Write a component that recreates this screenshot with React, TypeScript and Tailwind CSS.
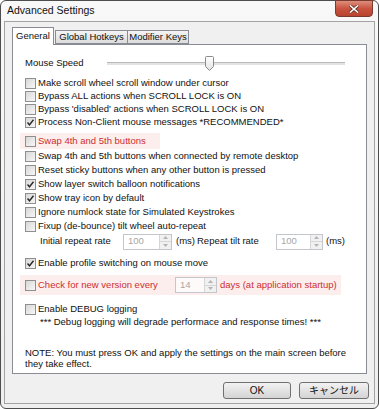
import React from "react";

const font = "font-['Liberation_Sans','Noto_Sans_CJK_JP',sans-serif]";

function CheckBox({ checked }: { checked?: boolean }) {
  return (
    <div className="relative h-[11px] w-[11px] shrink-0 border border-[#8f8f8f] bg-gradient-to-br from-[#d8d8d8] to-[#f7f7f7]">
      {checked && (
        <svg className="absolute left-0 top-0" width="9" height="9" viewBox="0 0 9 9">
          <path d="M1.5 4.5 L3.5 6.8 L7.5 1.8" fill="none" stroke="#2a2a2a" strokeWidth="1.4" />
        </svg>
      )}
    </div>
  );
}

function Row({ label, checked, h = "h-[14px]" }: { label: string; checked?: boolean; h?: string }) {
  return (
    <div className={`flex items-center ${h}`}>
      <CheckBox checked={checked} />
      <span className="ml-[2px] whitespace-nowrap">{label}</span>
    </div>
  );
}

function Spin({ value, w, bg = "bg-white" }: { value: string; w: string; bg?: string }) {
  return (
    <div className={`flex h-[16px] shrink-0 border border-[#c4c6cb] ${w} ${bg}`}>
      <div className="flex flex-1 items-center pl-[4px] text-[#a6a6a6]">{value}</div>
      <div className="flex w-[12px] flex-col border-l border-[#d6d6d6] bg-[#f1f1f1]">
        <div className="flex flex-1 items-center justify-center border-b border-[#d6d6d6]">
          <svg width="5" height="3" viewBox="0 0 5 3">
            <path d="M0 3 L2.5 0 L5 3 Z" fill="#b4b4b4" />
          </svg>
        </div>
        <div className="flex flex-1 items-center justify-center">
          <svg width="5" height="3" viewBox="0 0 5 3">
            <path d="M0 0 L2.5 3 L5 0 Z" fill="#b4b4b4" />
          </svg>
        </div>
      </div>
    </div>
  );
}

export default function App() {
  return (
    <div className={`h-[409px] w-[379px] bg-white text-[9.5px] text-[#111] ${font}`}>
      <div className="relative flex h-[409px] w-[379px] flex-col rounded-[6px] border border-[#4d4d4d] bg-gradient-to-b from-[#f8f8f8] to-[#efefef] px-[3px] pb-[4px]">
        {/* title bar */}
        <div className="flex h-[20px] items-center pl-[3px] text-[10.5px] text-[#111]">Advanced Settings</div>
        <div className="absolute right-[5px] top-[-1px] flex h-[17px] w-[38px] items-center justify-center rounded-b-[4px] border border-[#7a3a30] bg-gradient-to-b from-[#dc8e7c] via-[#c9533f] to-[#b84430]">
          <svg width="10" height="8" viewBox="0 0 10 8">
            <path d="M1 0.5 L9 7.5 M9 0.5 L1 7.5" stroke="#5a2a22" strokeWidth="3" />
            <path d="M1 0.5 L9 7.5 M9 0.5 L1 7.5" stroke="#ffffff" strokeWidth="1.6" />
          </svg>
        </div>

        {/* client */}
        <div className="flex flex-1 flex-col border border-[#a3a3a3] bg-[#f0f0f0] px-[7px] pt-[5px]">
          <div className="relative z-10 -mb-px flex h-[18px] items-end">
            <div className="flex h-[18px] w-[42px] items-center justify-center border border-b-0 border-[#898c95] bg-white pb-[1px]">
              General
            </div>
            <div className="mb-[1px] ml-[1px] flex h-[14px] w-[73px] items-center justify-center border border-[#898c95] bg-gradient-to-b from-[#f4f4f4] to-[#dcdcdc]">
              Global Hotkeys
            </div>
            <div className="-ml-px mb-[1px] flex h-[14px] w-[62px] items-center justify-center border border-[#898c95] bg-gradient-to-b from-[#f4f4f4] to-[#dcdcdc]">
              Modifier Keys
            </div>
          </div>

          <div className="flex h-[330px] flex-col border border-[#898c95] bg-white pl-[12px]">
            {/* mouse speed */}
            <div className="mt-[10px] flex h-[16px] items-center">
              <div className="w-[82px]">Mouse Speed</div>
              <div className="relative h-[3px] w-[238px] border-t border-[#b9b9b9] bg-[#e3e3e3]">
                <svg className="absolute left-[98px] top-[-7px]" width="9" height="15" viewBox="0 0 9 15">
                  <defs>
                    <linearGradient id="th" x1="0" y1="0" x2="0" y2="1">
                      <stop offset="0" stopColor="#ffffff" />
                      <stop offset="1" stopColor="#e2e2e2" />
                    </linearGradient>
                  </defs>
                  <path d="M0.5 1.5 Q0.5 0.5 1.5 0.5 H7.5 Q8.5 0.5 8.5 1.5 V10.5 L4.5 14.5 L0.5 10.5 Z" fill="url(#th)" stroke="#8b8b8b" />
                </svg>
              </div>
            </div>

            <div className="mt-[6px]">
              <Row label="Make scroll wheel scroll window under cursor" h="h-[13px]" />
              <Row label="Bypass ALL actions when SCROLL LOCK is ON" h="h-[13px]" />
              <Row label="Bypass 'disabled' actions when SCROLL LOCK is ON" h="h-[13px]" />
              <Row label="Process Non-Client mouse messages *RECOMMENDED*" checked h="h-[13px]" />
            </div>

            <div className="-ml-[5px] mt-[4px] flex h-[16px] w-fit items-center bg-[#fdeeee] pl-[5px] pr-[14px] text-[#cc2e2e]">
              <CheckBox />
              <span className="ml-[2px] whitespace-nowrap">Swap 4th and 5th buttons</span>
            </div>

            <Row label="Swap 4th and 5th buttons when connected by remote desktop" />
            <Row label="Reset sticky buttons when any other button is pressed" />
            <Row label="Show layer switch balloon notifications" checked />
            <Row label="Show tray icon by default" checked />
            <Row label="Ignore numlock state for Simulated Keystrokes" />
            <Row label="Fixup (de-bounce) tilt wheel auto-repeat" />

            <div className="flex h-[17px] items-center pl-[15px]">
              <div className="w-[83px] whitespace-nowrap">Initial repeat rate</div>
              <Spin value="100" w="w-[49px]" />
              <div className="ml-[4px] w-[21px]">(ms)</div>
              <div className="w-[79px] whitespace-nowrap">Repeat tilt rate</div>
              <Spin value="100" w="w-[47px]" />
              <div className="ml-[3px]">(ms)</div>
            </div>

            <div className="mt-[6px]">
              <Row label="Enable profile switching on mouse move" checked />
            </div>

            <div className="-ml-[5px] mt-[5px] flex h-[20px] w-fit items-center bg-[#fdeeee] pl-[5px] pr-[4px] text-[#cc2e2e]">
              <CheckBox />
              <span className="ml-[2px] w-[137px] whitespace-nowrap">Check for new version every</span>
              <Spin value="14" w="w-[42px]" bg="bg-[#fffafa]" />
              <span className="ml-[3px] whitespace-nowrap">days (at application startup)</span>
            </div>

            <div className="mt-[7px]">
              <Row label="Enable DEBUG logging" />
            </div>
            <div className="flex h-[12px] items-center whitespace-nowrap pl-[15px]">
              *** Debug logging will degrade performace and response times! ***
            </div>

            <div className="mt-[19px] whitespace-nowrap leading-[11px]">
              NOTE: You must press OK and apply the settings on the main screen before
              <br />
              they take effect.
            </div>
          </div>

          <div className="mt-[8px] flex justify-end gap-[8px]">
            <button className="flex h-[17px] w-[68px] items-center justify-center rounded-[3px] border border-[#707070] bg-gradient-to-b from-[#f2f2f2] to-[#d4d4d4] text-[10px]">
              OK
            </button>
            <button className="-mr-[2px] flex h-[17px] w-[70px] items-center justify-center rounded-[3px] border border-[#707070] bg-gradient-to-b from-[#f2f2f2] to-[#d4d4d4] text-[10px]">
              キャンセル
            </button>
          </div>
        </div>
      </div>
    </div>
  );
}
